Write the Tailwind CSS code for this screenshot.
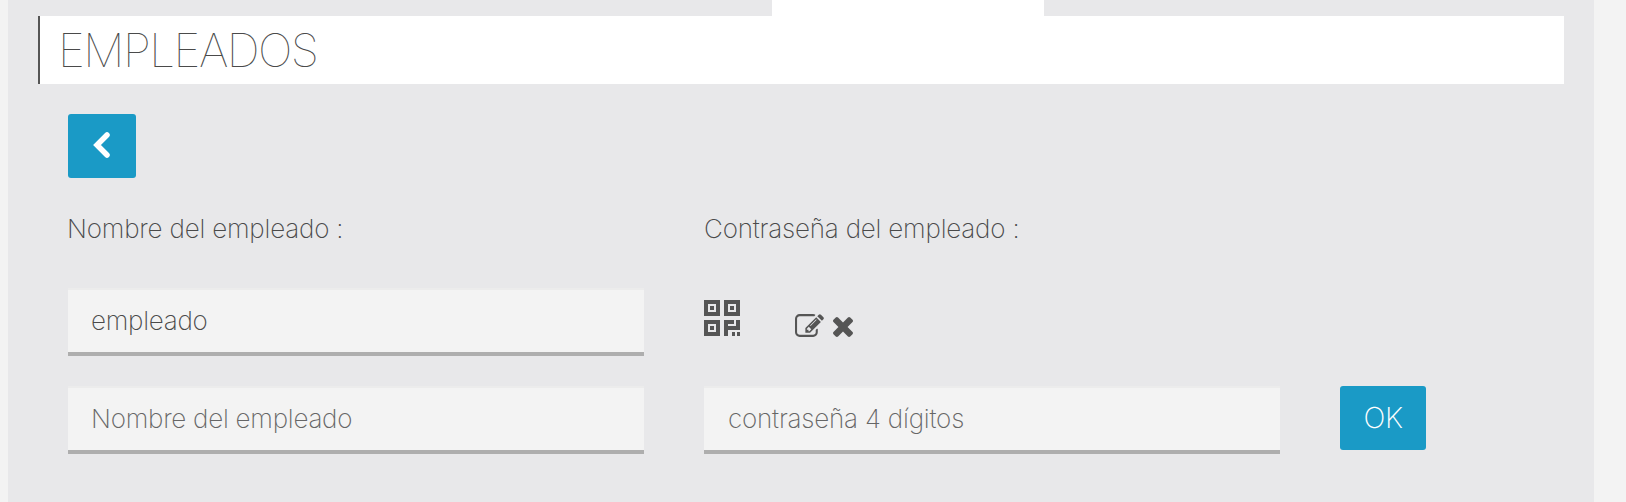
<!DOCTYPE html>
<html lang="es">
<head>
<meta charset="utf-8">
<script src="https://cdn.jsdelivr.net/npm/@tailwindcss/browser@4"></script>
<title>Empleados</title>
</head>
<body class="bg-[#f3f3f3] font-['Inter','Liberation_Sans',sans-serif] font-extralight text-[#4a4a4a] overflow-hidden">
<main class="ml-2 w-[1586px] h-[502px] bg-[#e8e8ea] flex flex-col">
  <div class="ml-[764px] w-[272px] h-4 bg-white shrink-0"></div>
  <h1 class="ml-[30px] w-[1526px] h-[68px] shrink-0 bg-white border-l-2 border-[#555555] pl-[18px] pb-px flex items-center text-[46px] tracking-[-1.55px] font-thin leading-none uppercase">Empleados</h1>
  <div class="ml-[60px] mt-[30px] flex flex-col items-start">
    <button class="w-[68px] h-16 bg-[#1a9ac6] rounded-[3px] flex items-center justify-center pb-0.5" aria-label="Volver">
      <svg width="20" height="28" viewBox="0 0 20 28" fill="none" stroke="white" stroke-width="5.5" stroke-linecap="round" stroke-linejoin="miter"><path d="M15 4 L5 14 L15 24"/></svg>
    </button>
    <div class="mt-[34px] grid grid-cols-[576px_576px_86px] gap-x-[60px] w-[1358px]">
      <div class="text-[26px] leading-[34px] tracking-[-0.2px] font-extralight -ml-px">Nombre del empleado :</div>
      <div class="text-[26px] leading-[34px] tracking-[-0.2px] font-extralight col-span-2">Contraseña del empleado :</div>

      <div class="mt-[42px] h-[68px] bg-[#f3f3f3] border-t-2 border-b-4 border-t-[#ececec] border-b-[#aeaeae] pl-[23px] pb-0.5 flex items-center text-[26px] tracking-[-0.25px] font-extralight">empleado</div>
      <div class="mt-[42px] h-[68px] col-span-2 flex items-start">
        <svg class="mt-[12px] shrink-0" width="37" height="37" viewBox="0 0 37 37" fill="#555555">
          <path fill-rule="evenodd" d="M0 0h16v16H0zM4 4v8h8V4zM6 6h4v4H6zM20 0h16v16H20zM24 4v8h8V4zM26 6h4v4h-4zM0 20h16v16H0zM4 24v8h8v-8zM6 26h4v4H6z"/>
          <path d="M20 20h10v4h-6v2h8v-6h4v10H24v6h-4zM28 32h3v4h-3zM33 32h3v4h-3z"/>
        </svg>
        <svg class="ml-[54px] mt-[26px] shrink-0" width="29" height="23" viewBox="0 128 1792 1408" fill="#555555"><path d="M888 1184l116-116-152-152-116 116v56h96v96h56zm440-720q-16-16-33 1l-350 350q-17 17-1 33t33-1l350-350q17-17 1-33zm80 594v190q0 119-84.5 203.5t-203.5 84.5h-832q-119 0-203.5-84.5t-84.5-203.5v-832q0-119 84.5-203.5t203.5-84.5h832q63 0 117 25 15 7 18 23 3 17-9 29l-49 49q-14 14-32 8-23-6-45-6h-832q-66 0-113 47t-47 113v832q0 66 47 113t113 47h832q66 0 113-47t47-113v-126q0-13 9-22l64-64q15-15 35-7t20 29zm-96-738l288 288-672 672h-288v-288zm444 132l-92 92-288-288 92-92q28-28 68-28t68 28l152 152q28 28 28 68t-28 68z"/></svg>
        <svg class="ml-[9px] mt-[29px] shrink-0" width="20" height="20" viewBox="110 258 1188 1188" fill="#555555"><path d="M1298 1214q0 40-28 68l-136 136q-28 28-68 28t-68-28l-294-294-294 294q-28 28-68 28t-68-28l-136-136q-28-28-28-68t28-68l294-294-294-294q-28-28-28-68t28-68l136-136q28-28 68-28t68 28l294 294 294-294q28-28 68-28t68 28l136 136q28 28 28 68t-28 68l-294 294 294 294q28 28 28 68z"/></svg>
      </div>

      <div class="mt-[30px] h-[68px] bg-[#f3f3f3] border-t-2 border-b-4 border-t-[#ececec] border-b-[#aeaeae] pl-[23px] pb-0.5 flex items-center text-[26px] tracking-[-0.25px] font-extralight text-[#666666]">Nombre del empleado</div>
      <div class="mt-[30px] h-[68px] bg-[#f3f3f3] border-t-2 border-b-4 border-t-[#ececec] border-b-[#aeaeae] pl-6 pb-0.5 flex items-center text-[26px] tracking-[-0.2px] font-extralight text-[#666666]">contraseña 4 dígitos</div>
      <button class="mt-[30px] h-16 bg-[#1a9ac6] rounded-[3px] text-white text-[29px] font-extralight tracking-[-0.4px] flex items-center justify-center">OK</button>
    </div>
  </div>
</main>
</body>
</html>
